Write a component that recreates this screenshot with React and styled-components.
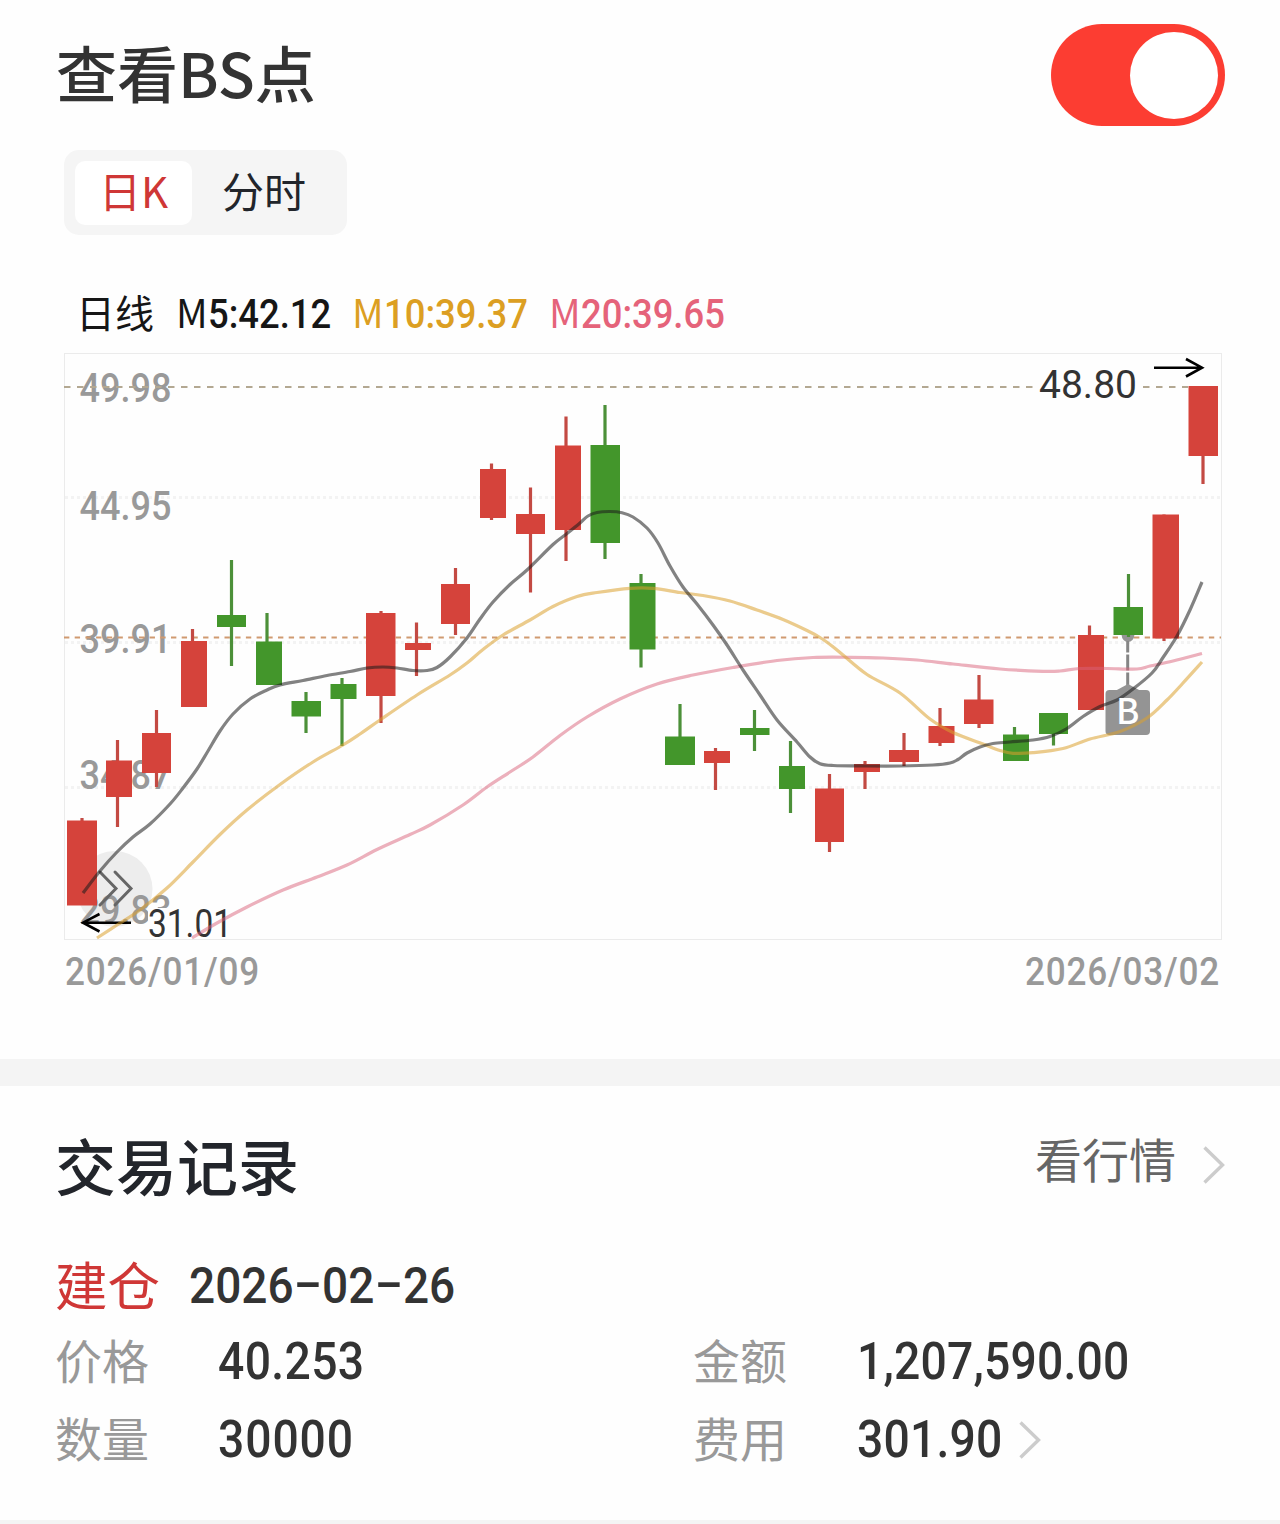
import React, { useState } from "react";
import styled, { createGlobalStyle } from "styled-components";

const RED = "#d5433b";
const GREEN = "#43962b";
const CJK = `"Noto Sans CJK SC", sans-serif`;
const DIGITS = `Roboto, "Noto Sans CJK SC", sans-serif`;

const GlobalStyle = createGlobalStyle`
  * {
    box-sizing: border-box;
  }
  body {
    margin: 0;
    background: #fefefe;
    font-family: ${CJK};
  }
`;

const Page = styled.main`
  width: 1280px;
  height: 1524px;
  overflow: hidden;
  display: flex;
  flex-direction: column;
`;

const ChartSection = styled.section`
  height: 1059px;
`;

const Header = styled.header`
  display: flex;
  justify-content: space-between;
  height: 150px;
  padding: 24px 55px 0 56px;
`;

const Title = styled.h1`
  margin: 0;
  font-size: ${(props) => props.$size}px;
  line-height: 96px;
  height: 96px;
  font-weight: 500;
  color: ${(props) => props.$color};
  white-space: nowrap;
`;

const Switch = styled.button`
  display: flex;
  align-items: center;
  justify-content: ${(props) => (props.$on ? "flex-end" : "flex-start")};
  width: 174px;
  height: 102px;
  padding: 0 7px;
  border: none;
  border-radius: 51px;
  background: ${(props) => (props.$on ? "#fc3d32" : "#ddd")};
`;

const Knob = styled.span`
  width: 88px;
  height: 87px;
  border-radius: 50%;
  background: #fff;
`;

const Tabs = styled.div`
  display: flex;
  width: 283px;
  height: 85px;
  margin-left: 64px;
  padding: 11px;
  border-radius: 15px;
  background: #f5f5f5;
`;

const Tab = styled.button`
  width: ${(props) => props.$width}px;
  height: 64px;
  padding: 0 0 7px;
  border: none;
  border-radius: 10px;
  font-family: ${CJK};
  font-size: 42px;
  line-height: 57px;
  color: ${(props) => (props.$active ? "#cf3736" : "#22252b")};
  background: ${(props) => (props.$active ? "#fff" : "transparent")};
`;

const Legend = styled.div`
  display: flex;
  height: 50px;
  margin-top: 51px;
  padding-left: 76px;
`;

const LegendItem = styled.span`
  display: flex;
  width: ${(props) => props.$width}px;
  font-size: 39px;
  line-height: 50px;
  color: ${(props) => props.$color};
`;

/* squeezes Roboto digits to the narrower DIN proportions */
const Num = styled.span`
  display: inline-block;
  padding-top: ${(props) => props.$drop || 0}px;
  font-family: ${DIGITS};
  font-size: ${(props) => props.$size}px;
  font-weight: 500;
  white-space: nowrap;
  letter-spacing: ${(props) => props.$gap || 0}px;
  transform: scaleX(${(props) => props.$scale || 0.92});
  transform-origin: left center;
`;

const ChartSvg = styled.svg`
  display: block;
  overflow: visible;
  margin: 16px 0 0 64px;
  font-family: ${DIGITS};
`;

const DateRow = styled.div`
  display: flex;
  justify-content: space-between;
  width: 1157px;
  margin-left: 65px;
  padding-top: 6px;
  line-height: 50px;
  color: #999;
`;

const DateText = styled.span`
  width: 197px;
`;

const Divider = styled.div`
  flex: none;
  height: ${(props) => props.$height}px;
  background: #f4f4f4;
`;

const Records = styled.section`
  height: 434px;
  padding: 0 55px;
`;

const RecordsHeader = styled.header`
  display: flex;
  justify-content: space-between;
  height: 165px;
  padding-top: 31px;
`;

const QuoteLink = styled.a`
  display: flex;
  gap: 27px;
  height: 92px;
  font-size: 47px;
  line-height: 82px;
  color: #666;

  svg {
    margin-top: 29px;
  }
`;

const Trade = styled.div`
  display: flex;
  height: 70px;
  line-height: 70px;
  color: #333;
`;

const Action = styled.span`
  width: 134px;
  font-size: 52.5px;
  line-height: 64px;
  color: #cf3736;
`;

const Dash = styled.span`
  display: inline-block;
  width: 31px;
  text-align: center;
  transform: translateY(-3px) scaleX(1.8);
`;

const Details = styled.div`
  display: grid;
  grid-template-columns: 163px 475px 164px 1fr;
  grid-auto-rows: 78px;
  line-height: 76px;
`;

const Label = styled.span`
  font-size: 47px;
  color: #999;
`;

const Value = styled.span`
  display: flex;
  color: #333;

  svg {
    margin-top: 22px;
  }
`;

const Fee = styled.span`
  display: flex;
  width: 162px;
`;

// x, body width, wick x, body top, body bottom, high, low, colour
const candles = [
  [67, 30, 82, 820.5, 905.5, 818, 905, RED],
  [106, 26, 117.5, 760.5, 797, 740, 827, RED],
  [142, 29, 156.5, 733, 773, 710, 787, RED],
  [181, 26, 192.5, 641, 707, 629, 707, RED],
  [217, 29, 231.5, 615, 627, 560, 666, GREEN],
  [256, 26, 267, 641.5, 685, 613, 685, GREEN],
  [291.5, 29.5, 306, 701, 716.5, 692, 733, GREEN],
  [330.5, 26, 342, 684, 699, 678, 746, GREEN],
  [366, 29.5, 381, 613, 696, 611, 723, RED],
  [405, 26, 416.5, 643, 650, 622.5, 676, RED],
  [441, 29, 455.5, 584, 624, 568, 635, RED],
  [480, 26, 491.5, 469, 518, 463.5, 520, RED],
  [516, 29, 530.5, 514, 534, 487.5, 592.5, RED],
  [555, 26, 566, 445.5, 530, 416.5, 561, RED],
  [590.5, 29.5, 605, 445, 543, 405, 559, GREEN],
  [629.5, 26, 641, 583, 649.5, 574, 667.5, GREEN],
  [665, 30, 680, 736.5, 765, 704, 765, GREEN],
  [704, 26, 715.5, 751, 763, 748, 790, RED],
  [740, 29.5, 754.5, 728, 735, 710, 751, GREEN],
  [779, 26, 790.5, 766, 789, 741, 813, GREEN],
  [815, 29, 829.5, 788.5, 842, 774, 852, RED],
  [854, 26, 865, 764, 772, 761, 789, RED],
  [889, 30, 904, 750, 762, 733, 766, RED],
  [928.5, 26, 940, 726, 743, 708, 746, RED],
  [964, 29.5, 979, 699.5, 724, 675, 728, RED],
  [1003, 26, 1014.5, 734.5, 761, 727, 761, GREEN],
  [1039, 29, 1053.5, 713, 734, 713, 745.5, GREEN],
  [1078, 26, 1089.5, 635, 710, 625.5, 710, RED],
  [1113.5, 29.5, 1128.5, 607, 635, 574, 637, GREEN],
  [1152.5, 26.5, 1164, 514.5, 638.5, 514.5, 641, RED],
  [1188.5, 29.5, 1203, 386, 456, 386, 484, RED],
];

const ma5 = [
  83, 893, 100, 871, 117, 852, 133, 837, 150, 824, 170, 804, 183, 788, 197, 769, 208, 751, 220, 731,
  233, 714, 250, 699, 267, 690, 280, 685, 303, 680.5, 327, 675.5, 350, 671.5, 367, 668, 383, 667,
  397, 668, 413, 670.5, 427, 670.5, 437, 667.5, 450, 657, 467, 638, 480, 619, 493, 602, 510, 584.5,
  527, 570, 553, 544.5, 567, 533.5, 580, 523, 588, 516, 597, 512.5, 610, 511.5, 622, 512.7, 633, 517,
  647, 528, 658, 543, 670, 566, 683, 587, 697, 604, 713, 625, 727, 645, 743, 670, 760, 695, 777, 720,
  797, 742, 810, 757, 820, 763.7, 833, 765.5, 867, 766, 900, 766, 933, 765, 950, 763, 958, 759.5,
  967, 753, 980, 747, 993, 743.5, 1010, 742, 1033, 740, 1050, 736.5, 1067, 728.5, 1083, 716.5,
  1100, 706.5, 1117, 700, 1133, 689, 1152, 673, 1163, 657.5, 1177, 636, 1190, 610, 1202, 582,
];

const ma10 = [
  97, 938, 117, 925, 140, 910, 167, 888, 193, 862, 220, 834.5, 247, 810, 280, 784.5, 313, 762,
  343, 745, 360, 734, 380, 720, 417, 695, 450, 675, 467, 663, 483, 649.5, 503, 635, 530, 620,
  553, 606.5, 577, 596.5, 597, 592.5, 630, 588.3, 653, 588.3, 680, 592.5, 703, 595.5, 730, 601,
  757, 610, 783, 619.5, 808, 631, 820, 637.5, 832, 646, 843, 655, 867, 674.5, 900, 693, 930, 719,
  953, 732.5, 983, 744, 1000, 750.5, 1013, 753.3, 1033, 752.7, 1063, 748.5, 1090, 739, 1120, 731.5,
  1147, 718, 1167, 700, 1183, 683, 1202, 662,
];

const ma20 = [
  192, 938, 217, 923, 247, 907, 283, 890, 317, 877, 347, 865, 377, 849.5, 410, 834.5, 430, 825,
  463, 805, 487, 787, 510, 772, 533, 757, 560, 735.5, 587, 717, 620, 699, 657, 684, 693, 675,
  733, 667.5, 777, 660.5, 813, 657.5, 850, 657.3, 883, 658, 917, 660, 953, 664, 1000, 669,
  1043, 671.3, 1060, 671, 1080, 668.5, 1107, 668.5, 1137, 669, 1150, 666, 1173, 661, 1202, 653.5,
];

const priceLabels = [
  ["49.98", 402],
  ["44.95", 520],
  ["39.91", 653],
  ["34.87", 789],
  ["29.83", 924],
];

// Catmull-Rom through a flat [x, y, x, y, ...] list
const smooth = (flat) => {
  const p = [];
  for (let i = 0; i < flat.length; i += 2) p.push([flat[i], flat[i + 1]]);
  let d = `M${p[0][0]} ${p[0][1]}`;
  for (let i = 0; i < p.length - 1; i++) {
    const a = p[i - 1] || p[i];
    const b = p[i];
    const c = p[i + 1];
    const e = p[i + 2] || c;
    d += `C${b[0] + (c[0] - a[0]) / 6} ${b[1] + (c[1] - a[1]) / 6} ${c[0] - (e[0] - b[0]) / 6} ${
      c[1] - (e[1] - b[1]) / 6
    } ${c[0]} ${c[1]}`;
  }
  return d;
};

const Chevron = ({ width, height }) => (
  <svg width={width} height={height} viewBox="0 0 22 38" fill="none" stroke="#ccc" strokeWidth="3.4">
    <path d="M1.5 1.5L19.5 19L1.5 36.5" />
  </svg>
);

const Candle = ({ data }) => {
  const [x, w, wick, top, bottom, high, low, color] = data;
  return (
    <g fill={color}>
      <rect x={wick - 1.6} y={high} width="3.2" height={low - high} fill={color === RED ? "#c34a43" : "#4c9039"} />
      <rect x={x} y={top} width={w} height={bottom - top} />
    </g>
  );
};

const KLineChart = () => (
  <ChartSvg width="1159" height="589" viewBox="64 352 1159 589">
    <rect x="64.5" y="353.5" width="1157" height="586" fill="none" stroke="#ebebeb" />
    {[497.5, 642.5, 787.5].map((y) => (
      <path key={y} d={`M65 ${y}H1221`} stroke="#f3f3f3" strokeWidth="3" strokeDasharray="3 3" />
    ))}
    <circle cx="114.5" cy="889" r="38" fill="#ededed" />
    <g fill="#999" fontSize="40" fontWeight="500">
      {priceLabels.map(([text, y]) => (
        <text key={text} x="79.5" y={y} textLength="92" lengthAdjust="spacingAndGlyphs">
          {text}
        </text>
      ))}
    </g>
    <path d="M64 387H1188" stroke="#b3a892" strokeWidth="1.8" strokeDasharray="6.5 6.5" />
    <path d="M64 637.5H1221" stroke="#d09a70" strokeWidth="2" strokeDasharray="5.35 5.35" />
    <rect x="1036" y="370" width="105" height="30" fill="#fefefe" />
    <rect x="148" y="908" width="83" height="30" fill="#fefefe" />
    <g fill="#333" fontSize="38">
      <text x="1039" y="398" textLength="98" lengthAdjust="spacingAndGlyphs">
        48.80
      </text>
      <text x="148" y="937" textLength="84" lengthAdjust="spacingAndGlyphs">
        31.01
      </text>
    </g>
    <g fill="none" stroke="#000" strokeWidth="2.6">
      <path d="M1154 367.700H1202M1186 359L1202 367.700L1186 376.500" />
      <path d="M131 922.700H83M99.500 914L83 922.700L99.500 931.500" />
    </g>
    <path
      d="M100 872L116 888.500L100 905M115 872L131 888.500L115 905"
      fill="none"
      stroke="#666"
      strokeWidth="3"
      strokeLinecap="round"
    />
    <g fill="#949494">
      <circle cx="1128" cy="635.5" r="6.3" />
      <path d="M1127.700 641V652.500M1127.700 654.500V670.500M1127.700 672.500V685" stroke="#858585" strokeWidth="3" />
      <path d="M1116 690.500L1128 684L1140 690.500Z" />
      <rect x="1105.5" y="690" width="44.5" height="45" rx="4" />
    </g>
    {candles.map((c) => (
      <Candle key={c[0]} data={c} />
    ))}
    <g fill="none" strokeWidth="3.2" strokeLinejoin="round">
      <path d={smooth(ma20)} stroke="#d9627a" strokeOpacity="0.5" />
      <path d={smooth(ma10)} stroke="#dba02d" strokeOpacity="0.55" />
      <path d={smooth(ma5)} stroke="#1c1c1c" strokeOpacity="0.55" />
    </g>
    <text
      x="1127.8"
      y="724"
      fill="#fff"
      fontSize="35"
      fontWeight="500"
      fontFamily="Noto Sans CJK SC, sans-serif"
      textAnchor="middle"
    >
      B
    </text>
  </ChartSvg>
);

const legend = [
  { name: "M", value: "5:42.12", color: "#161616", width: 176 },
  { name: "M", value: "10:39.37", color: "#dc9f22", width: 197 },
  { name: "M", value: "20:39.65", color: "#e5637a", width: 190 },
];

const App = () => {
  const [on, setOn] = useState(true);
  const [tab, setTab] = useState("day");

  return (
    <>
      <GlobalStyle />
      <Page>
        <ChartSection>
          <Header>
            <Title $color="#333" $size={61}>
              查看BS点
            </Title>
            <Switch $on={on} onClick={() => setOn(!on)}>
              <Knob />
            </Switch>
          </Header>
          <Tabs>
            <Tab $width={117} $active={tab === "day"} onClick={() => setTab("day")}>
              日K
            </Tab>
            <Tab $width={144} $active={tab === "minute"} onClick={() => setTab("minute")}>
              分时
            </Tab>
          </Tabs>
          <Legend>
            <LegendItem $width={100} $color="#161616">
              日线
            </LegendItem>
            {legend.map((item) => (
              <LegendItem key={item.value} $width={item.width} $color={item.color}>
                {item.name}
                <Num $size={40} $scale={0.91} $drop={4}>
                  {item.value}
                </Num>
              </LegendItem>
            ))}
          </Legend>
          <KLineChart />
          <DateRow>
            <DateText>
              <Num $size={39} $scale={0.9} $gap={0.9}>
                2026/01/09
              </Num>
            </DateText>
            <DateText>
              <Num $size={39} $scale={0.9} $gap={0.9}>
                2026/03/02
              </Num>
            </DateText>
          </DateRow>
        </ChartSection>
        <Divider $height={27} />
        <Records>
          <RecordsHeader>
            <Title as="h2" $color="#22252b" $size={61}>
              交易记录
            </Title>
            <QuoteLink>
              看行情
              <Chevron width={22} height={38} />
            </QuoteLink>
          </RecordsHeader>
          <Trade>
            <Action>建仓</Action>
            <Num $size={50}>
              2026<Dash>-</Dash>02<Dash>-</Dash>26
            </Num>
          </Trade>
          <Details>
            <Label>价格</Label>
            <Value>
              <Num $size={52} $scale={0.89} $gap={0.4} $drop={3}>
                40.253
              </Num>
            </Value>
            <Label>金额</Label>
            <Value>
              <Num $size={52} $scale={0.89} $gap={0.2} $drop={3}>
                1,207,590.00
              </Num>
            </Value>
            <Label>数量</Label>
            <Value>
              <Num $size={52} $scale={0.89} $gap={1} $drop={3}>
                30000
              </Num>
            </Value>
            <Label>费用</Label>
            <Value>
              <Fee>
                <Num $size={52} $scale={0.89} $gap={0.2} $drop={3}>
                  301.90
                </Num>
              </Fee>
              <Chevron width={22} height={38} />
            </Value>
          </Details>
        </Records>
        <Divider $height={4} />
      </Page>
    </>
  );
};

export default App;
